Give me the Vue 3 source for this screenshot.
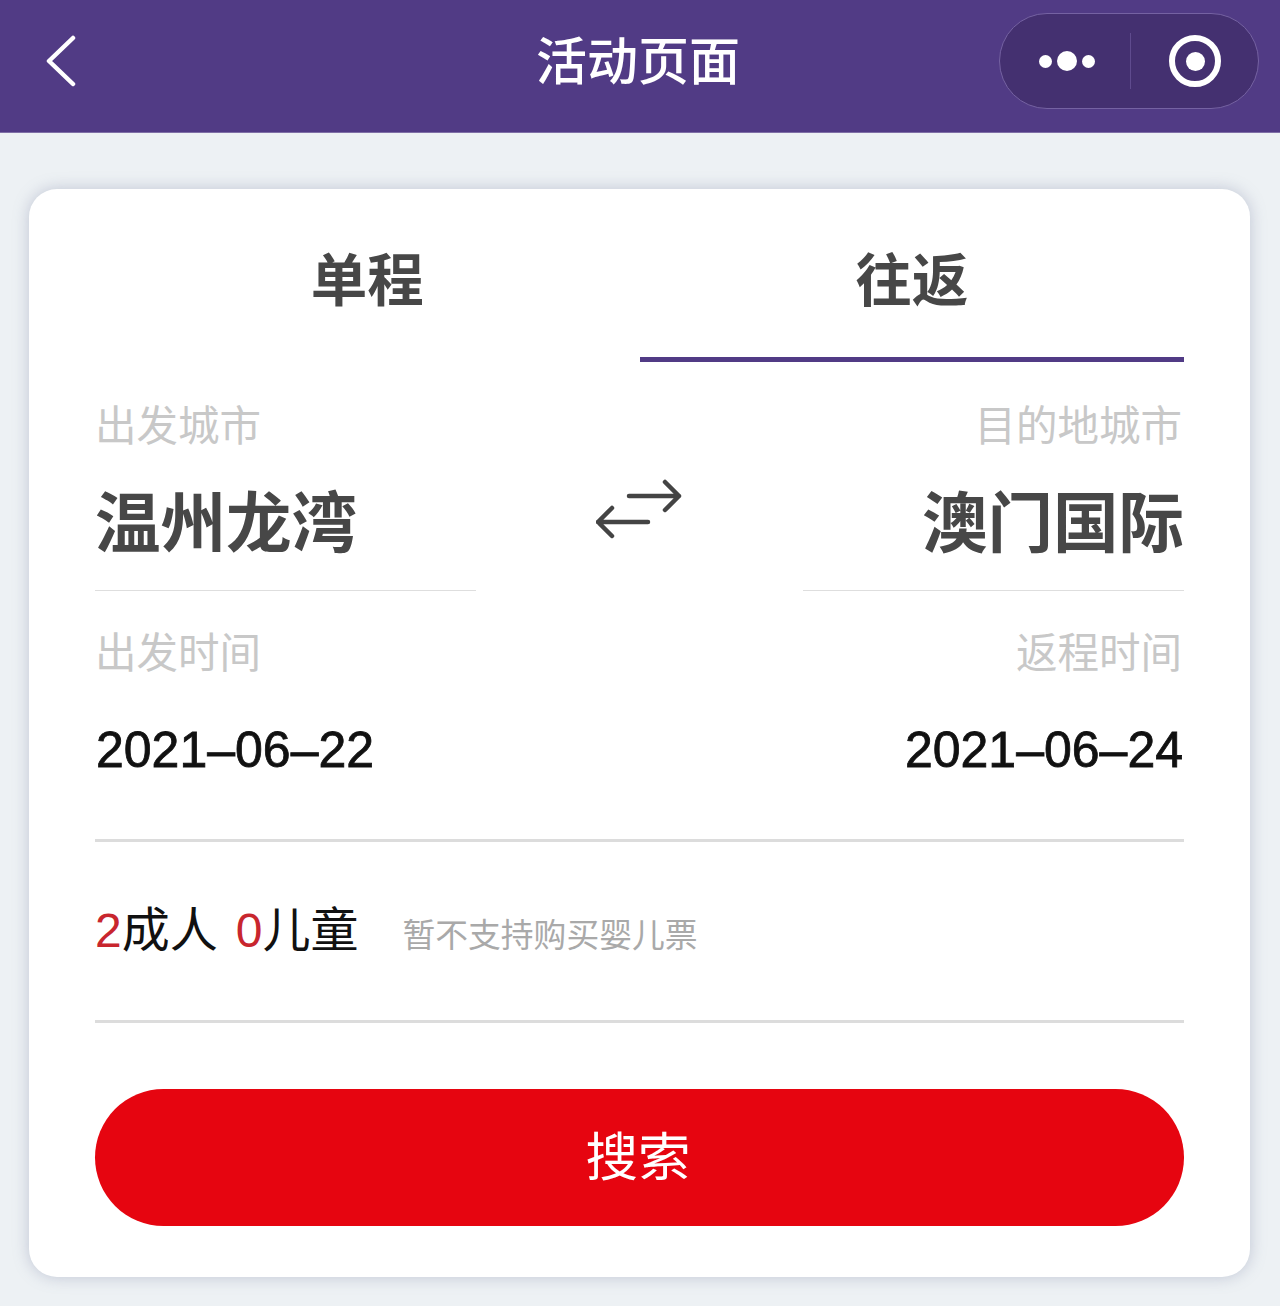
<script setup>
const tabs = [
  { label: '单程', active: false },
  { label: '往返', active: true },
]
</script>

<template>
  <div class="page">
    <header class="nav">
      <svg class="back" width="32" height="56" viewBox="0 0 32 56">
        <path d="M27 5 L3 28 L27 51" fill="none" stroke="#fff" stroke-width="4.500" stroke-linecap="round" stroke-linejoin="round"/>
      </svg>
      <h1 class="title">活动页面</h1>
      <div class="capsule">
        <div class="dots">
          <span class="dot"></span><span class="dot big"></span><span class="dot"></span>
        </div>
        <span class="sep"></span>
        <span class="target"><span class="core"></span></span>
      </div>
    </header>

    <main class="card">
      <div class="tabs">
        <div v-for="t in tabs" :key="t.label" class="tab" :class="{ active: t.active }">{{ t.label }}</div>
      </div>

      <div class="route">
        <div class="col">
          <div class="label">出发城市</div>
          <div class="city">温州龙湾</div>
        </div>
        <svg class="swap" width="88" height="64" viewBox="0 0 88 64">
          <g fill="none" stroke="#444" stroke-width="4.500" stroke-linecap="round" stroke-linejoin="round">
            <path d="M33 21 H83 M69 7 L83 21 L69 35"/>
            <path d="M52 47 H2 M16 33 L2 47 L16 61"/>
          </g>
        </svg>
        <div class="col right">
          <div class="label">目的地城市</div>
          <div class="city">澳门国际</div>
        </div>
      </div>

      <div class="dates">
        <div>
          <div class="label">出发时间</div>
          <div class="date">2021–06–22</div>
        </div>
        <div class="right">
          <div class="label">返程时间</div>
          <div class="date">2021–06–24</div>
        </div>
      </div>

      <div class="people">
        <span class="count"><em>2</em>成人</span>
        <span class="count second"><em>0</em>儿童</span>
        <span class="note">暂不支持购买婴儿票</span>
      </div>

      <button class="search">搜索</button>
    </main>
  </div>
</template>

<style>
html, body { margin: 0; background: #edf1f4; }
</style>

<style scoped>
.page {
  width: 1280px;
  height: 1306px;
  background: #edf1f4;
  font-family: "Liberation Sans", "Noto Sans CJK SC", sans-serif;
  overflow: hidden;
}
.nav {
  height: 116px;
  padding-bottom: 16px;
  padding-right: 4px;
  background: #513b85;
  position: relative;
  display: flex;
  align-items: center;
  justify-content: center;
  border-bottom: 1px solid #7f6fa6;
  box-sizing: content-box;
  width: 1276px;
}
.back { position: absolute; left: 46px; top: 33px; }
.title {
  margin: 0;
  font-size: 51px;
  font-weight: 500;
  color: #fff;
  font-family: "Noto Sans CJK SC", sans-serif;
  line-height: 60px;
}
.capsule {
  position: absolute;
  left: 999px;
  top: 13px;
  width: 260px;
  height: 96px;
  box-sizing: border-box;
  border: 1px solid #7562a2;
  border-radius: 48px;
  background: #443070;
  display: flex;
  align-items: center;
}
.dots { display: flex; align-items: center; gap: 5px; margin-left: 39px; width: 91px; }
.dot { width: 13px; height: 13px; border-radius: 50%; background: #fff; }
.dot.big { width: 20px; height: 20px; }
.sep { width: 1px; height: 56px; background: #5f4b8e; }
.target {
  width: 52px; height: 52px;
  margin-left: 38px;
  box-sizing: border-box;
  border: 6px solid #fff;
  border-radius: 50%;
  display: flex; align-items: center; justify-content: center;
}
.core { width: 19px; height: 19px; border-radius: 50%; background: #fff; }

.card {
  margin: 56px 0 0 29px;
  width: 1221px;
  height: 1088px;
  box-sizing: border-box;
  background: #fff;
  border-radius: 28px;
  box-shadow: 0 0 16px rgba(110, 120, 155, .36);
  padding: 0 66px;
  display: flex;
  flex-direction: column;
}
.tabs { display: flex; height: 173px; }
.tab {
  flex: 1;
  text-align: center;
  font-size: 56.500px;
  font-weight: 700;
  line-height: 64px;
  padding-top: 55px;
  color: #474747;
  font-family: "Noto Sans CJK SC", sans-serif;
  box-sizing: border-box;
}
.tab.active { border-bottom: 5px solid #513b85; }

.route { display: flex; justify-content: space-between; height: 229px; }
.col { width: 381px; box-sizing: border-box; border-bottom: 1px solid #dedede; padding-top: 34px; }
.right { text-align: right; }
.label {
  font-size: 41.500px;
  line-height: 54px;
  color: #c8c8c8;
  padding: 0 2px 0 0;
  font-family: "Noto Sans CJK SC", sans-serif;
  font-weight: 400;
}
.city {
  font-size: 65.500px;
  line-height: 80px;
  margin-top: 29px;
  font-weight: 700;
  color: #474747;
  font-family: "Noto Sans CJK SC", sans-serif;
}
.swap { margin-top: 113px; }

.dates {
  display: flex;
  justify-content: space-between;
  height: 251px;
  box-sizing: border-box;
  padding-top: 32px;
  border-bottom: 3px solid #dcdcdc;
}
.date {
  font-size: 50px;
  line-height: 56px;
  color: #111;
  margin-top: 45px;
  padding: 0 1px;
  -webkit-text-stroke: 0.8px #111;
}

.people {
  height: 181px;
  box-sizing: border-box;
  border-bottom: 3px solid #dcdcdc;
  display: flex;
  align-items: center;
  padding-bottom: 10px;
  font-family: "Noto Sans CJK SC", sans-serif;
}
.count { font-size: 48px; color: #111; }
.count em { font-style: normal; color: #c8262e; font-family: "Liberation Sans", sans-serif; font-size: 48px; }
.count.second { margin-left: 18px; }
.note { font-size: 32.800px; color: #a9a9a9; margin-left: 44px; margin-top: 12px; }

.search {
  margin-top: 66px;
  height: 137px;
  border: 0;
  border-radius: 69px;
  background: #e60510;
  color: #fff;
  font-size: 52.500px;
  font-family: "Noto Sans CJK SC", sans-serif;
  font-weight: 400;
  padding: 0 3px 9px 0;
}
</style>
